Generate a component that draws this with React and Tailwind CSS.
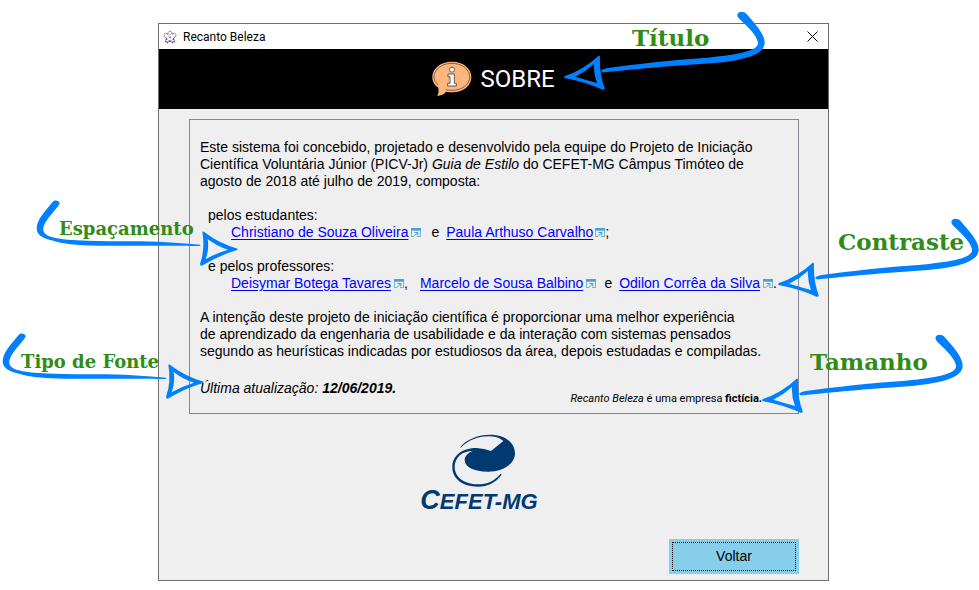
import React from 'react';

const BLUE = '#0080ff';

function ArrowLeft() {
  return (
    <svg width="201" height="80" viewBox="0 0 603 240" aria-hidden="true" className="block">
      <g fill={BLUE}>
        <path transform="scale(1 .935)" d="M521 13C525 3 539 4 547 12C573 44 603 78 602 106C600 139 558 161 430 172C320 179 200 192 122 200Q112 200 112 194Q115 190 132 186C220 173 320 161 430 153C535 142 585 129 582 104C579 83 555 57 525 27Q518 20 521 13Z" />
        <path fillRule="evenodd" d="M1 199Q60 178 104 137Q108 136 108 142Q106 190 122 235Q122 241 116 239Q62 215 1 204Z M34 200Q70 211 99 219Q88 190 90 162Q66 184 34 200Z" />
      </g>
    </svg>
  );
}

function ArrowRight() {
  return (
    <svg width="204" height="68" viewBox="0 0 612 204" aria-hidden="true" className="block">
      <g fill={BLUE}>
        <path d="M56 9C62 2 75 4 77 13C74 27 26 66 28 93C30 112 60 120 128 124C220 129 300 126 373 128Q450 132 498 137Q502 140 496 141C420 139 373 141 280 140C200 141 120 139 80 131C40 122 10 115 8 91C7 62 34 36 56 9Z" />
        <path fillRule="evenodd" d="M505 98Q508 96 514 101Q554 132 611 149Q612 152 607 154Q556 169 506 199Q498 202 498 195Q514 150 505 98Z M521 120Q526 150 515 181Q545 163 582 152Q547 141 521 120Z" />
      </g>
    </svg>
  );
}

function ExternalIcon() {
  return (
    <svg width="10" height="9" viewBox="0 0 10 9" aria-hidden="true" className="-mb-px shrink-0">
      <path d="M0 0H10V9H6V8H9V3H1V8H3V9H0Z" fill="#6bb9e0" />
      <path d="M0 0H10V2H0Z" fill="#4aa3d6" />
      <path d="M3.500 4.500H6.800V7.500M6.600 4.800L3 8.400" fill="none" stroke="#4a9cc9" />
    </svg>
  );
}

function Person({ href, children, after, gap }) {
  return (
    <span className={`flex items-baseline ${gap}`}>
      <a href={href} className="text-[#0000ff] underline underline-offset-2">{children}</a>
      <span className="flex items-baseline">
        <ExternalIcon />
        {after}
      </span>
    </span>
  );
}

function FlowerIcon() {
  return (
    <svg width="14" height="14" viewBox="0 0 14 14" fill="none" stroke="#5c2a7c" strokeDasharray="1.500 0.800" aria-hidden="true">
      <path d="M5 4.500Q4.500 2 7 1Q9.500 2 9 4.500M4.500 4Q1.500 2.500 1 5Q1 7.500 4 8M9.500 4Q12.500 2.500 13 5Q13 7.500 10 8" strokeWidth=".9" />
      <path d="M4 8.500Q2 11 3.500 12.500Q5.500 13 6.500 10.500M10 8.500Q12 11 10.500 12.500Q8.500 13 7.500 10.500" strokeWidth="1.500" />
      <path d="M7 4V9M5.500 6.500L7 8L8.500 6.500" strokeWidth=".6" />
    </svg>
  );
}

function InfoBubble() {
  return (
    <svg width="40" height="36" viewBox="0 0 120 108" aria-hidden="true">
      <path d="M60 2C94 2 118 22 118 48C118 74 94 94 60 94Q50 94 43 92Q32 103 16 105Q22 94 19 80C6 72 1 60 1 48C1 22 26 2 60 2Z" fill="#ffb67c" />
      <path d="M60 7C90 7 113 25 113 48C113 71 90 88 60 88Q49 88 41 86M18 72Q6 62 6 48C6 25 30 7 60 7" fill="none" stroke="#4b3424" strokeWidth="2" />
      <circle cx="60" cy="26" r="7.500" fill="#fff" stroke="#4b4038" strokeWidth="2.500" />
      <path d="M48 39H67V67H73V75H47V67H54V47H48Z" fill="#fff" stroke="#4b4038" strokeWidth="2.500" />
    </svg>
  );
}

function CefetLogo() {
  return (
    <div className="flex flex-col items-center text-[#003a70]">
      <svg width="64" height="54" viewBox="156 40 192 162" role="img" aria-label="CEFET-MG" className="ml-2.5">
        <path d="M181 79C200 55 236 42 270 42C315 42 345 66 345 98C345 128 312 153 264 153C221 153 194 139 194 118C194 106 204 96 219 90C185 91 164 111 164 139C164 169 193 191 233 191C263 191 284 180 302 159L305 162C287 186 263 198 234 198C187 198 157 174 157 139C157 103 189 82 230 82Q253 83 273 91L310 61C298 50 282 47 264 47C232 47 205 59 182 81Z" fill="currentColor" />
      </svg>
      <p className="font-bold italic text-[22px] leading-6"><span className="text-[27px]">C</span>EFET-MG</p>
    </div>
  );
}

function Note({ className, label, size, labelClass, children }) {
  return (
    <div className={`absolute pointer-events-none ${className}`}>
      {children}
      <span className={`absolute whitespace-nowrap font-bold text-[#318c16] font-['DejaVu_Serif',serif] leading-6 ${size} ${labelClass}`}>{label}</span>
    </div>
  );
}

export default function App() {
  return (
    <main className="relative min-h-screen bg-white pt-[23px] pb-2 pl-[158px] pr-[150px] text-sm leading-[17px] text-black font-['Liberation_Sans',Arial,sans-serif]">
      <section className="border border-[#6e6e6e] bg-[#efefef]">
        <header className="flex h-[25px] items-center gap-1.5 bg-white pl-1 pr-2 font-['Roboto',sans-serif] text-xs">
          <FlowerIcon />
          <span className="flex-1">Recanto Beleza</span>
          <button type="button" aria-label="Fechar" className="p-0.5">
            <svg width="11" height="11" viewBox="0 0 11 11" aria-hidden="true"><path d="M.5.5L10.500 10.500M10.500.5L.5 10.500" stroke="#000" /></svg>
          </button>
        </header>
        <div className="flex h-[60px] items-center justify-center gap-2 bg-black text-white">
          <InfoBubble />
          <h1 className="font-['Roboto',sans-serif] text-2xl">SOBRE</h1>
        </div>

        <div className="pl-[30px] pr-[29px] pt-2.5 pb-1.5">
          <div className="border border-[#828790] px-2.5 pt-[19px] pb-1.5">
            <p>
              Este sistema foi concebido, projetado e desenvolvido pela equipe do Projeto de Iniciação<br />
              Científica Voluntária Júnior (PICV-Jr) <i>Guia de Estilo</i> do CEFET-MG Câmpus Timóteo de<br />
              agosto de 2018 até julho de 2019, composta:
            </p>
            <p className="mt-[17px] pl-2">pelos estudantes:</p>
            <div className="flex items-baseline gap-2.5 whitespace-nowrap pl-[31px]">
              <Person href="#christiano" gap="gap-[3px]">Christiano de Souza Oliveira</Person>
              <span className="flex items-baseline gap-[7px]">
                <span>e</span>
                <Person href="#paula" gap="gap-0.5" after=";">Paula Arthuso Carvalho</Person>
              </span>
            </div>
            <p className="mt-[17px] pl-2">e pelos professores:</p>
            <div className="flex items-baseline whitespace-nowrap pl-[31px]">
              <Person href="#deisymar" gap="gap-[3px] mr-3" after=",">Deisymar Botega Tavares</Person>
              <Person href="#marcelo" gap="gap-[3px] mr-2">Marcelo de Sousa Balbino</Person>
              <span className="mr-[7px]">e</span>
              <Person href="#odilon" gap="gap-[3px]" after=".">Odilon Corrêa da Silva</Person>
            </div>
            <p className="mt-[17px]">
              A intenção deste projeto de iniciação científica é proporcionar uma melhor experiência<br />
              de aprendizado da engenharia de usabilidade e da interação com sistemas pensados<br />
              segundo as heurísticas indicadas por estudiosos da área, depois estudadas e compiladas.
            </p>
            <div className="mt-5 flex items-end justify-between">
              <p className="pb-2.5 italic">Última atualização: <b>12/06/2019.</b></p>
              <p className="pr-[26px] font-['Roboto',sans-serif] text-[11px] leading-[17px]"><i>Recanto Beleza</i> é uma empresa <b>fictícia.</b></p>
            </div>
          </div>
          <div className="flex justify-center pt-5 pr-[30px]">
            <CefetLogo />
          </div>
          <div className="mt-[25px] flex justify-end">
            <button type="button" className="w-[130px] bg-[#87ceeb] p-[3px]">
              <span className="block border border-dotted border-black py-[5px]">Voltar</span>
            </button>
          </div>
        </div>
      </section>

      <Note className="right-[214px] top-2.5" label="Título" size="text-[23px]" labelClass="left-[68px] top-4"><ArrowLeft /></Note>
      <Note className="right-0 top-[217px]" label="Contraste" size="text-[23px]" labelClass="left-[60px] top-[13px]"><ArrowLeft /></Note>
      <Note className="right-4 top-[333px]" label="Tamanho" size="text-[23px]" labelClass="left-[48px] top-[17px]"><ArrowLeft /></Note>
      <Note className="left-[34px] top-[199px]" label="Espaçamento" size="text-lg" labelClass="left-[25px] top-[18px]"><ArrowRight /></Note>
      <Note className="left-0 top-[332px]" label="Tipo de Fonte" size="text-lg" labelClass="left-[21px] top-[18px]"><ArrowRight /></Note>
    </main>
  );
}
